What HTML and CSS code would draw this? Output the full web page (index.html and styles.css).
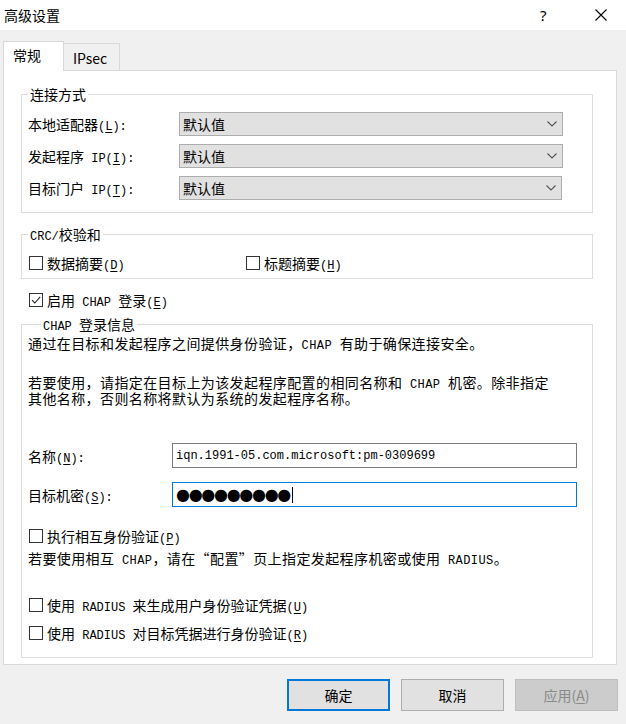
FILE: index.html
```html
<!DOCTYPE html>
<html>
  <head>
    <meta charset="UTF-8">
    <title>高级设置</title>
    <link rel="stylesheet" href="styles.css">
  </head>
  <body>
  <div class="titlebar">
    <span class="title">高级设置</span>
    <span class="help">?</span>
    <span class="close">
      <svg width="12" height="12" viewBox="0 0 12 12"><path d="M0.5 0.5 L11.5 11.5 M11.5 0.5 L0.5 11.5" stroke="#000" stroke-width="1.1" fill="none"/></svg>
    </span>
  </div>
  <div class="client">
    <div class="tabs">
      <div class="tab active">常规</div>
      <div class="tab">IPsec</div>
    </div>
    <div class="panel">
      <fieldset class="group conn">
        <legend>连接方式</legend>
        <div class="row">
          <span class="label">本地适配器<span class="en">(<u>L</u>):</span></span>
          <div class="select"><span>默认值</span><svg width="10" height="6" viewBox="0 0 10 6"><path d="M0.5 0.5 L5 5 L9.5 0.5" stroke="#555" stroke-width="1.1" fill="none"/></svg></div>
        </div>
        <div class="row">
          <span class="label">发起程序<span class="en"> IP(<u>I</u>):</span></span>
          <div class="select"><span>默认值</span><svg width="10" height="6" viewBox="0 0 10 6"><path d="M0.5 0.5 L5 5 L9.5 0.5" stroke="#555" stroke-width="1.1" fill="none"/></svg></div>
        </div>
        <div class="row">
          <span class="label">目标门户<span class="en"> IP(<u>T</u>):</span></span>
          <div class="select short"><span>默认值</span><svg width="10" height="6" viewBox="0 0 10 6"><path d="M0.5 0.5 L5 5 L9.5 0.5" stroke="#555" stroke-width="1.1" fill="none"/></svg></div>
        </div>
      </fieldset>

      <fieldset class="group crc">
        <legend><span class="en">CRC/</span>校验和</legend>
        <div class="checks">
          <label class="check wide"><span class="box"></span><span>数据摘要<span class="en">(<u>D</u>)</span></span></label>
          <label class="check"><span class="box"></span><span>标题摘要<span class="en">(<u>H</u>)</span></span></label>
        </div>
      </fieldset>

      <label class="check chap-on"><span class="box"><svg width="12" height="12" viewBox="0 0 12 12"><path d="M2 6.2 L4.8 9 L10.2 2.8" stroke="#222" stroke-width="1.1" fill="none"/></svg></span><span>启用<span class="en"> CHAP </span>登录<span class="en">(<u>E</u>)</span></span></label>

      <fieldset class="group chap">
        <legend><span class="en">CHAP </span>登录信息</legend>
        <p class="intro">通过在目标和发起程序之间提供身份验证，<span class="en">CHAP </span>有助于确保连接安全。</p>
        <p class="usage">若要使用，请指定在目标上为该发起程序配置的相同名称和<span class="en"> CHAP </span>机密。除非指定<br>其他名称，否则名称将默认为系统的发起程序名称。</p>
        <div class="field name">
          <span class="label">名称<span class="en">(<u>N</u>):</span></span>
          <div class="input">iqn.1991-05.com.microsoft:pm-0309699</div>
        </div>
        <div class="field secret">
          <span class="label">目标机密<span class="en">(<u>S</u>):</span></span>
          <div class="input focus"><span class="dots">●●●●●●●●●</span><span class="caret"></span></div>
        </div>
        <label class="check mutual"><span class="box"></span><span>执行相互身份验证<span class="en">(<u>P</u>)</span></span></label>
        <p class="note">若要使用相互<span class="en"> CHAP</span>，请在“配置”页上指定发起程序机密或使用<span class="en"> RADIUS</span>。</p>
        <label class="check radius"><span class="box"></span><span>使用<span class="en"> RADIUS </span>来生成用户身份验证凭据<span class="en">(<u>U</u>)</span></span></label>
        <label class="check radius2"><span class="box"></span><span>使用<span class="en"> RADIUS </span>对目标凭据进行身份验证<span class="en">(<u>R</u>)</span></span></label>
      </fieldset>
    </div>
    <div class="buttons">
      <button class="btn default">确定</button>
      <button class="btn">取消</button>
      <button class="btn" disabled>应用(<u>A</u>)</button>
    </div>
  </div>
  </body>
</html>
```

FILE: styles.css
```css
body {
  margin: 0;
  background: #f0f0f0;
  color: #000;
  font-family: "Noto Sans CJK SC", "Noto Sans", sans-serif;
  font-size: 14px;
}

/* latin runs in the old dialog font are narrow and monospaced */
.en { font-family: "Liberation Mono", monospace; font-size: 12px; white-space: pre; line-height: 0; }
u { text-decoration: underline; text-underline-offset: 2px; }

/* title bar */
.titlebar {
  height: 30px;
  background: #fff;
  display: flex;
  align-items: center;
  padding-left: 4px;
}
.title { font-size: 14px; flex: 1; }
.help { font-size: 15px; font-family: "Noto Sans", sans-serif; width: 55px; }
.close { width: 31px; display: flex; }

/* tabs */
.client { padding: 11px 9px 0 3px; }
.tabs {
  display: flex;
  align-items: flex-end;
  height: 30px;
  margin-bottom: -1px;
}
.tab {
  border: 1px solid #d9d9d9;
  border-bottom: none;
  box-sizing: border-box;
}
.tab.active {
  position: relative;
  z-index: 1;
  width: 61px;
  height: 30px;
  background: #fff;
  padding: 2px 0 0 9px;
  line-height: 22px;
}
.tab:not(.active) {
  width: 56px;
  height: 28px;
  border-left: none;
  padding: 3px 0 0 9px;
  line-height: 22px;
}

.panel {
  background: #fff;
  border: 1px solid #d9d9d9;
}

/* group boxes */
.group {
  margin: 0 23px 0 17px;
  padding: 0 0 0 6px;
  border: 1px solid #dcdcdc;
  min-width: 0;
}
.group legend {
  padding: 0 2px;
  line-height: 18px;
  height: 18px;
  font-size: 14px;
}
.conn { margin-top: 14px; padding-top: 9px; padding-bottom: 12px; }
.crc { margin-top: 12px; padding-top: 10px; padding-bottom: 5px; }
.chap { margin-top: 5px; padding-bottom: 14px; margin-bottom: 6px; }
.chap legend { margin-left: 13px; }

.row {
  display: flex;
  align-items: center;
  height: 24px;
  margin-bottom: 8px;
}
.row:last-child { margin-bottom: 0; }
.label { width: 151px; flex: none; }

.select {
  box-sizing: border-box;
  width: 384px;
  height: 24px;
  background: #e1e1e1;
  border: 1px solid #adadad;
  padding: 0 5px 0 3px;
  display: flex;
  align-items: center;
  justify-content: space-between;
  line-height: 22px;
}
.select.short { width: 383px; }

/* checkboxes */
.checks { display: flex; }
.check {
  display: flex;
  align-items: center;
  height: 20px;
  margin-left: 1px;
}
.check.wide { width: 216px; }
.box {
  box-sizing: border-box;
  width: 14px;
  height: 14px;
  border: 1px solid #333;
  background: #fff;
  margin-right: 4px;
  display: flex;
  align-items: center;
  justify-content: center;
}
.chap-on { margin: 11px 0 0 25px; }

/* chap info */
p { margin: 0; white-space: nowrap; letter-spacing: 0.4px; }
.intro { margin-top: 2px; line-height: 16px; height: 16px; }
.usage { margin-top: 23px; line-height: 16px; height: 32px; }

.field {
  display: flex;
  align-items: center;
  height: 25px;
}
.field .label { width: 144px; }
.name { margin-top: 37px; }
.secret { margin-top: 14px; }
.input {
  box-sizing: border-box;
  width: 405px;
  height: 25px;
  border: 1px solid #7a7a7a;
  padding-left: 3px;
  display: flex;
  align-items: center;
  font-family: "Liberation Mono", monospace;
  font-size: 12px;
}
.input.focus { border-color: #0078d7; }
.dots {
  font-family: "DejaVu Sans", sans-serif;
  font-size: 16px;
  letter-spacing: -1.3px;
  line-height: 20px;
}
.caret {
  width: 1px;
  height: 16px;
  background: #000;
  margin-left: 2px;
}

.mutual { margin-top: 19px; }
.note { margin-top: 4px; line-height: 16px; height: 16px; }
.radius { margin-top: 29px; }
.radius2 { margin-top: 8px; }

/* dialog buttons */
.buttons {
  display: flex;
  justify-content: flex-end;
  margin-top: 14px;
  margin-right: -1px;
}
.btn {
  box-sizing: border-box;
  width: 103px;
  height: 32px;
  margin-left: 11px;
  background: #e1e1e1;
  border: 1px solid #adadad;
  font-family: "Noto Sans CJK SC", sans-serif;
  font-size: 14px;
  color: #000;
  padding: 0;
}
.btn.default { border: 2px solid #0078d7; }
.btn:disabled { background: #cccccc; border-color: #bfbfbf; color: #8a8a8a; }
```
